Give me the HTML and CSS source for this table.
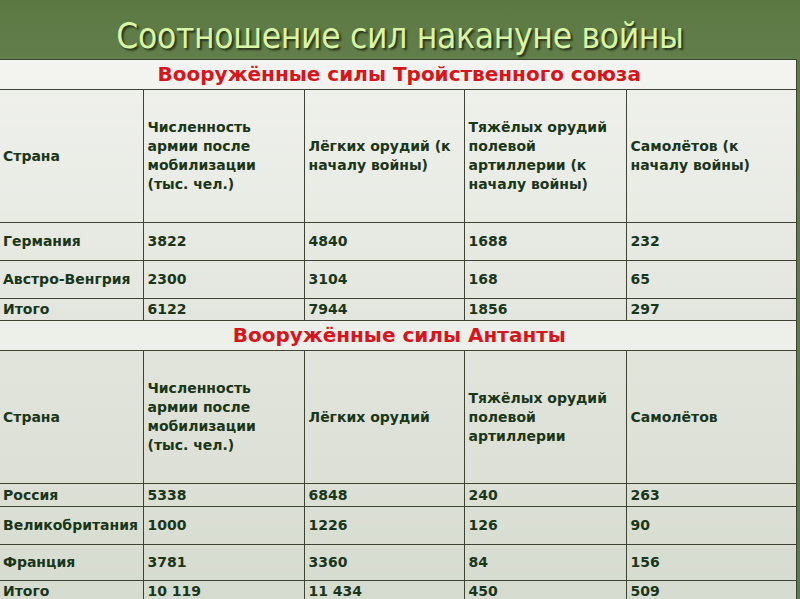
FILE: index.html
```html
<!DOCTYPE html>
<html lang="ru">
<head>
<meta charset="utf-8">
<title>Соотношение сил накануне войны</title>
<link rel="stylesheet" href="styles.css">
</head>
<body>
<div class="slide">
  <header class="title-bar">
    <h1 class="title">Соотношение сил накануне войны</h1>
  </header>
  <table class="forces">
    <colgroup>
      <col class="c1"><col class="c2"><col class="c3"><col class="c4"><col class="c5">
    </colgroup>
    <tbody>
      <tr class="r-section"><td colspan="5" class="section">Вооружённые силы Тройственного союза</td></tr>
      <tr class="r-head">
        <td>Страна</td>
        <td>Численность армии после мобилизации (тыс. чел.)</td>
        <td>Лёгких орудий (к началу войны)</td>
        <td>Тяжёлых орудий полевой артиллерии (к началу войны)</td>
        <td>Самолётов (к началу войны)</td>
      </tr>
      <tr class="r-38"><td>Германия</td><td>3822</td><td>4840</td><td>1688</td><td>232</td></tr>
      <tr class="r-38"><td>Австро-Венгрия</td><td>2300</td><td>3104</td><td>168</td><td>65</td></tr>
      <tr class="r-22"><td>Итого</td><td>6122</td><td>7944</td><td>1856</td><td>297</td></tr>
      <tr class="r-section"><td colspan="5" class="section">Вооружённые силы Антанты</td></tr>
      <tr class="r-head">
        <td>Страна</td>
        <td>Численность армии после мобилизации (тыс. чел.)</td>
        <td>Лёгких орудий</td>
        <td>Тяжёлых орудий полевой артиллерии</td>
        <td>Самолётов</td>
      </tr>
      <tr class="r-23"><td>Россия</td><td>5338</td><td>6848</td><td>240</td><td>263</td></tr>
      <tr class="r-38"><td>Великобритания</td><td>1000</td><td>1226</td><td>126</td><td>90</td></tr>
      <tr class="r-36"><td>Франция</td><td>3781</td><td>3360</td><td>84</td><td>156</td></tr>
      <tr class="r-22"><td>Итого</td><td>10 119</td><td>11 434</td><td>450</td><td>509</td></tr>
    </tbody>
  </table>
</div>
</body>
</html>
```
FILE: styles.css
```css
html, body {
  margin: 0;
  padding: 0;
}
body {
  background: #5e7a45;
  width: 800px;
  height: 599px;
  overflow: hidden;
}
.slide {
  width: 800px;
}
.title-bar {
  height: 59px;
  display: flex;
  align-items: flex-start;
  justify-content: center;
  background: linear-gradient(#5c7843, #627e4a);
}
.title {
  margin: 0;
  padding: 16px 0 0 0;
  font-family: "DejaVu Sans Condensed", "DejaVu Sans", sans-serif;
  font-weight: normal;
  font-size: 35px;
  line-height: 40px;
  color: #d9f5a6;
  text-shadow: 2px 2px 2px #26331b;
  letter-spacing: -0.3px;
}
.forces {
  border-collapse: collapse;
  width: 796px;
  table-layout: fixed;
  background: linear-gradient(#f0f1ed, #e2e5dd 50%, #d6dbcf);
  font-family: "DejaVu Sans", sans-serif;
  font-weight: bold;
  font-size: 14px;
  line-height: 19px;
  color: #1a361a;
}
.c1 { width: 143px; }
.c2 { width: 161px; }
.c3 { width: 160px; }
.c4 { width: 162px; }
.c5 { width: 170px; }
.forces td {
  border: 1px solid #3d4434;
  padding: 0 4px;
  vertical-align: middle;
  text-align: left;
}
.forces td:first-child {
  border-left: none;
  padding-left: 3px;
}
.forces .section {
  text-align: center;
  color: #d6161c;
  font-size: 20px;
  padding: 0;
  background: rgba(245,245,242,0.6);
}
.r-section { height: 30px; }
.r-head { height: 133px; }
.r-38 { height: 38px; }
.r-36 { height: 36px; }
.r-23 { height: 23px; }
.r-22 { height: 22px; }
```
